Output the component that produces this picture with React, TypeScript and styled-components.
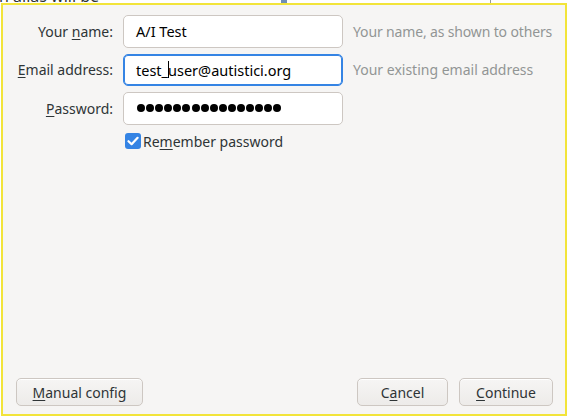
import React from "react";
import styled, { createGlobalStyle } from "styled-components";

const GlobalStyle = createGlobalStyle`
  html, body {
    margin: 0;
    padding: 0;
    background: #ffffff;
    font-family: "Noto Sans", "DejaVu Sans", sans-serif;
  }
  * { box-sizing: border-box; }
`;

const Desktop = styled.div`
  position: relative;
  width: 569px;
  height: 418px;
  overflow: hidden;
  padding: 3px 2px 2px 1px;
`;

const BehindText = styled.span`
  position: absolute;
  top: -15px;
  left: -1px;
  font-size: 16px;
  color: #2e3436;
  white-space: nowrap;
`;

const BehindMark = styled.span<{ $x: number; $w: number; $color: string }>`
  position: absolute;
  top: 0;
  left: ${(p) => p.$x}px;
  width: ${(p) => p.$w}px;
  height: 4px;
  background: ${(p) => p.$color};
`;

const Dialog = styled.div`
  position: relative;
  height: 100%;
  border: 2px solid #f2e43a;
  background: #f6f5f4;
  display: flex;
  flex-direction: column;
  justify-content: space-between;
  color: #2e3436;
  font-size: 14px;
`;

const Form = styled.div`
  display: grid;
  grid-template-columns: 110px 220px auto;
  column-gap: 10px;
  row-gap: 6px;
  align-items: center;
  padding-top: 10px;
`;

const Label = styled.label`
  text-align: right;
  white-space: nowrap;
  color: #2e3436;
`;

const Mn = styled.span`
  text-decoration: underline;
  text-underline-offset: 2px;
`;

const Field = styled.div<{ $focused?: boolean }>`
  height: 32.5px;
  background: #ffffff;
  border: 1px solid ${(p) => (p.$focused ? "#3584e4" : "#cdc7c2")};
  box-shadow: ${(p) => (p.$focused ? "inset 0 0 0 1px #3584e4" : "none")};
  border-radius: 5px;
  display: flex;
  align-items: center;
  padding-left: 12px;
  color: #000000;
  font-size: 14.5px;
  white-space: nowrap;
`;

const Caret = styled.span`
  display: inline-block;
  width: 1px;
  height: 17px;
  margin-right: -1px;
  background: #000000;
  vertical-align: -3px;
`;

const Dots = styled.div`
  display: flex;
  gap: 1.1px;
  padding-left: 1px;
`;

const Dot = styled.span`
  width: 8px;
  height: 8px;
  border-radius: 50%;
  background: #000000;
`;

const Hint = styled.span<{ $tight?: boolean }>`
  color: #929595;
  white-space: nowrap;
  letter-spacing: ${(p) => (p.$tight ? "-0.15px" : "0")};
`;

const CheckRow = styled.div`
  grid-column: 2 / 4;
  display: flex;
  align-items: center;
  margin-top: 1px;
  padding-left: 2px;
  color: #2e3436;
`;

const Box = styled.span`
  width: 16px;
  height: 16px;
  border-radius: 3px;
  background: #3584e4;
  display: flex;
  align-items: center;
  justify-content: center;
  margin-right: 2px;
`;

const Buttons = styled.div`
  display: flex;
  align-items: center;
  gap: 11px;
  padding: 0 12px 8px 13px;
`;

const Button = styled.button<{ $w: number }>`
  width: ${(p) => p.$w}px;
  height: 28px;
  border: 1px solid #cdc7c2;
  border-radius: 5px;
  background: linear-gradient(to bottom, #f6f5f4, #edebe9);
  box-shadow: inset 0 1px #ffffff;
  font-family: "Noto Sans", "DejaVu Sans", sans-serif;
  font-size: 14px;
  color: #2e3436;
  padding: 0;

  &:first-child {
    margin-right: auto;
  }
`;

export default function App() {
  return (
    <>
      <GlobalStyle />
      <Desktop>
        <BehindText>n alias will be</BehindText>
        <BehindMark $x={281} $w={6} $color="#6f8fb5" />
        <BehindMark $x={490} $w={1} $color="#9a9a9a" />
        <Dialog>
          <Form>
            <Label>
              Your <Mn>n</Mn>ame:
            </Label>
            <Field>A/I Test</Field>
            <Hint $tight>Your name, as shown to others</Hint>

            <Label>
              <Mn>E</Mn>mail address:
            </Label>
            <Field $focused>
              test_
              <Caret />
              user@autistici.org
            </Field>
            <Hint>Your existing email address</Hint>

            <Label>
              <Mn>P</Mn>assword:
            </Label>
            <Field>
              <Dots>
                {Array.from({ length: 16 }).map((_, i) => (
                  <Dot key={i} />
                ))}
              </Dots>
            </Field>
            <span />

            <span />
            <CheckRow>
              <Box>
                <svg width="12" height="10" viewBox="0 0 12 10">
                  <path d="M1.5 5.2 L4.6 8.2 L10.6 1.8" fill="none" stroke="#ffffff" strokeWidth="2.2" strokeLinecap="round" strokeLinejoin="round" />
                </svg>
              </Box>
              Re<Mn>m</Mn>ember password
            </CheckRow>
          </Form>

          <Buttons>
            <Button $w={127}>
              <Mn>M</Mn>anual config
            </Button>
            <Button $w={91}>
              C<Mn>a</Mn>ncel
            </Button>
            <Button $w={94}>
              <Mn>C</Mn>ontinue
            </Button>
          </Buttons>
        </Dialog>
      </Desktop>
    </>
  );
}
